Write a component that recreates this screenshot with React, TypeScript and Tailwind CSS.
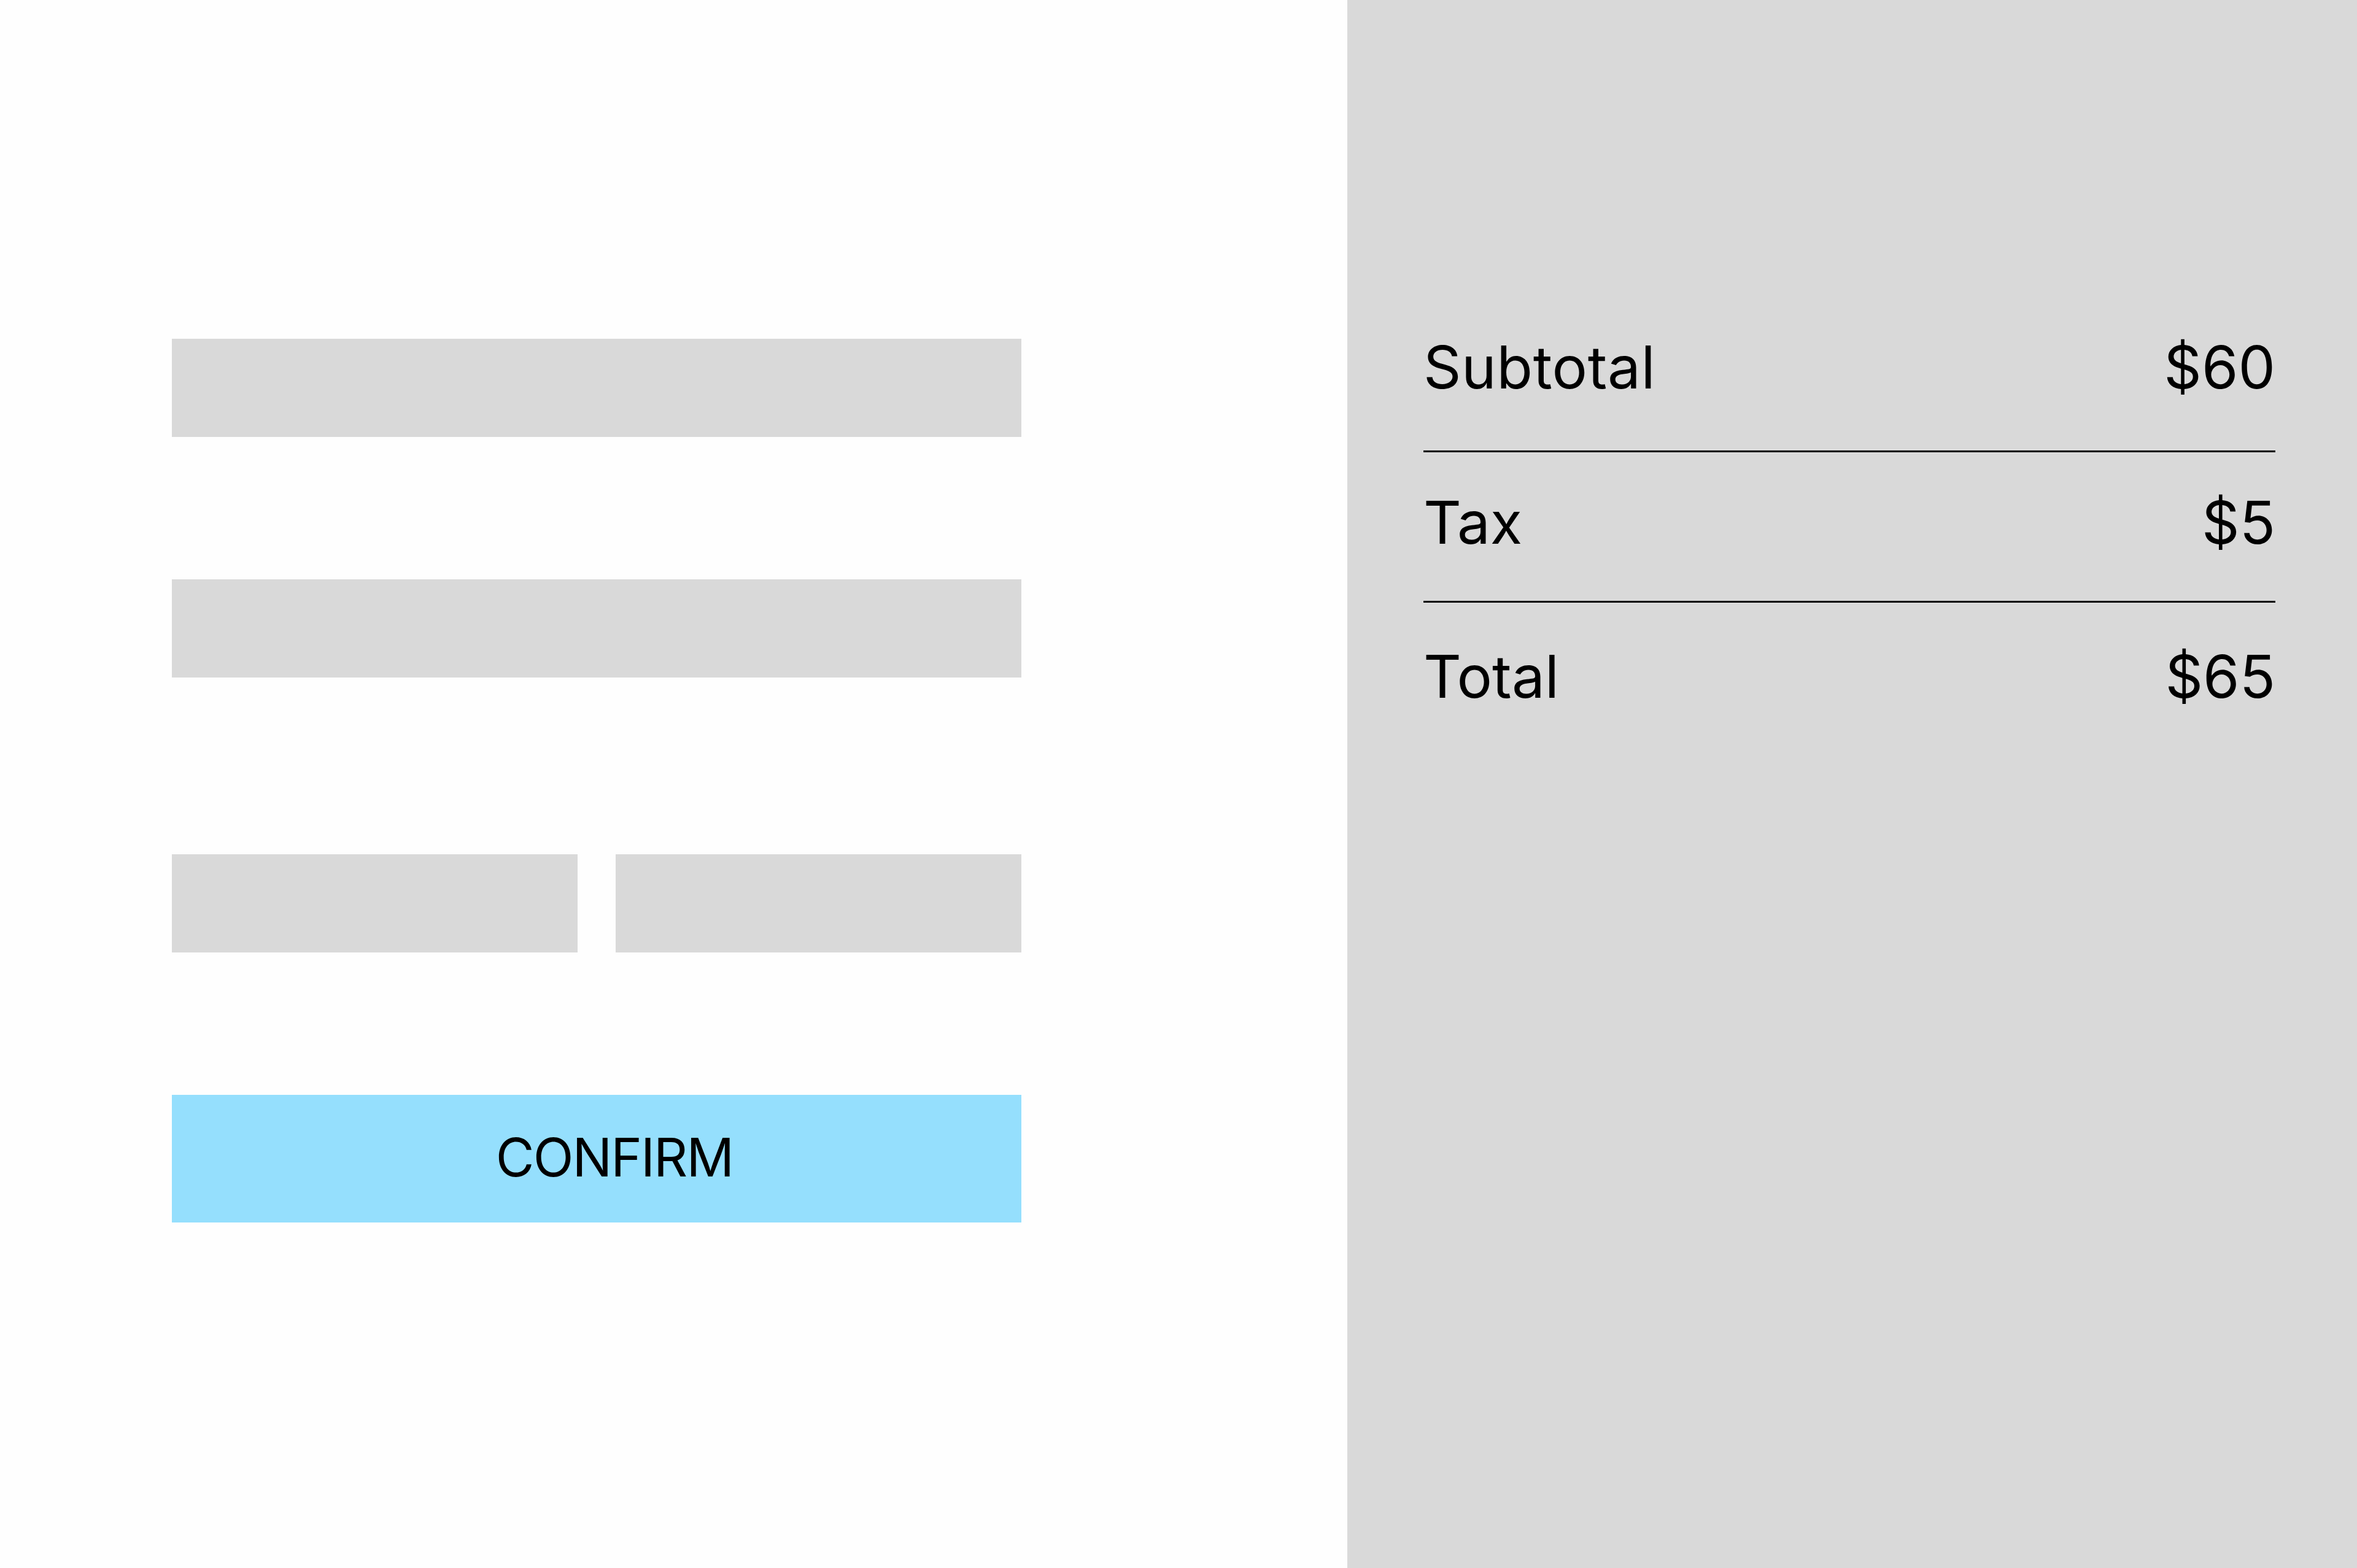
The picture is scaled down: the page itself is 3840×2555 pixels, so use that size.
import React from "react";

export default function App() {
  return (
    <div className="flex w-[3840px] h-[2555px] bg-white" style={{ fontFamily: "Inter, 'Noto Sans', sans-serif" }}>
      <div className="w-[2195px] shrink-0 bg-[#fefefe] pl-[280px] pt-[552px]">
        <div className="w-[1384px] flex flex-col">
          <div className="h-[160px] bg-[#d9d9d9]" />
          <div className="h-[160px] bg-[#d9d9d9] mt-[232px]" />
          <div className="flex gap-[62px] mt-[288px]">
            <div className="h-[160px] flex-1 bg-[#d9d9d9]" />
            <div className="h-[160px] flex-1 bg-[#d9d9d9]" />
          </div>
          <button className="mt-[232px] h-[208px] bg-[#95dffd] flex items-center justify-center pl-[58px] pb-[4px] text-[86px] tracking-[-2px] leading-none text-black">
            CONFIRM
          </button>
        </div>
      </div>
      <div className="flex-1 bg-[#d9d9d9] pl-[124px] pr-[133px] pt-[540px] text-black">
        <div className="flex justify-between text-[96px] leading-[116px]">
          <span className="tracking-[0.5px]">Subtotal</span>
          <span>$60</span>
        </div>
        <div className="h-[3px] bg-black mt-[78px]" />
        <div className="flex justify-between text-[96px] leading-[116px] mt-[56px]">
          <span>Tax</span>
          <span>$5</span>
        </div>
        <div className="h-[3px] bg-black mt-[70px]" />
        <div className="flex justify-between text-[96px] leading-[116px] mt-[62px]">
          <span>Total</span>
          <span>$65</span>
        </div>
      </div>
    </div>
  );
}
